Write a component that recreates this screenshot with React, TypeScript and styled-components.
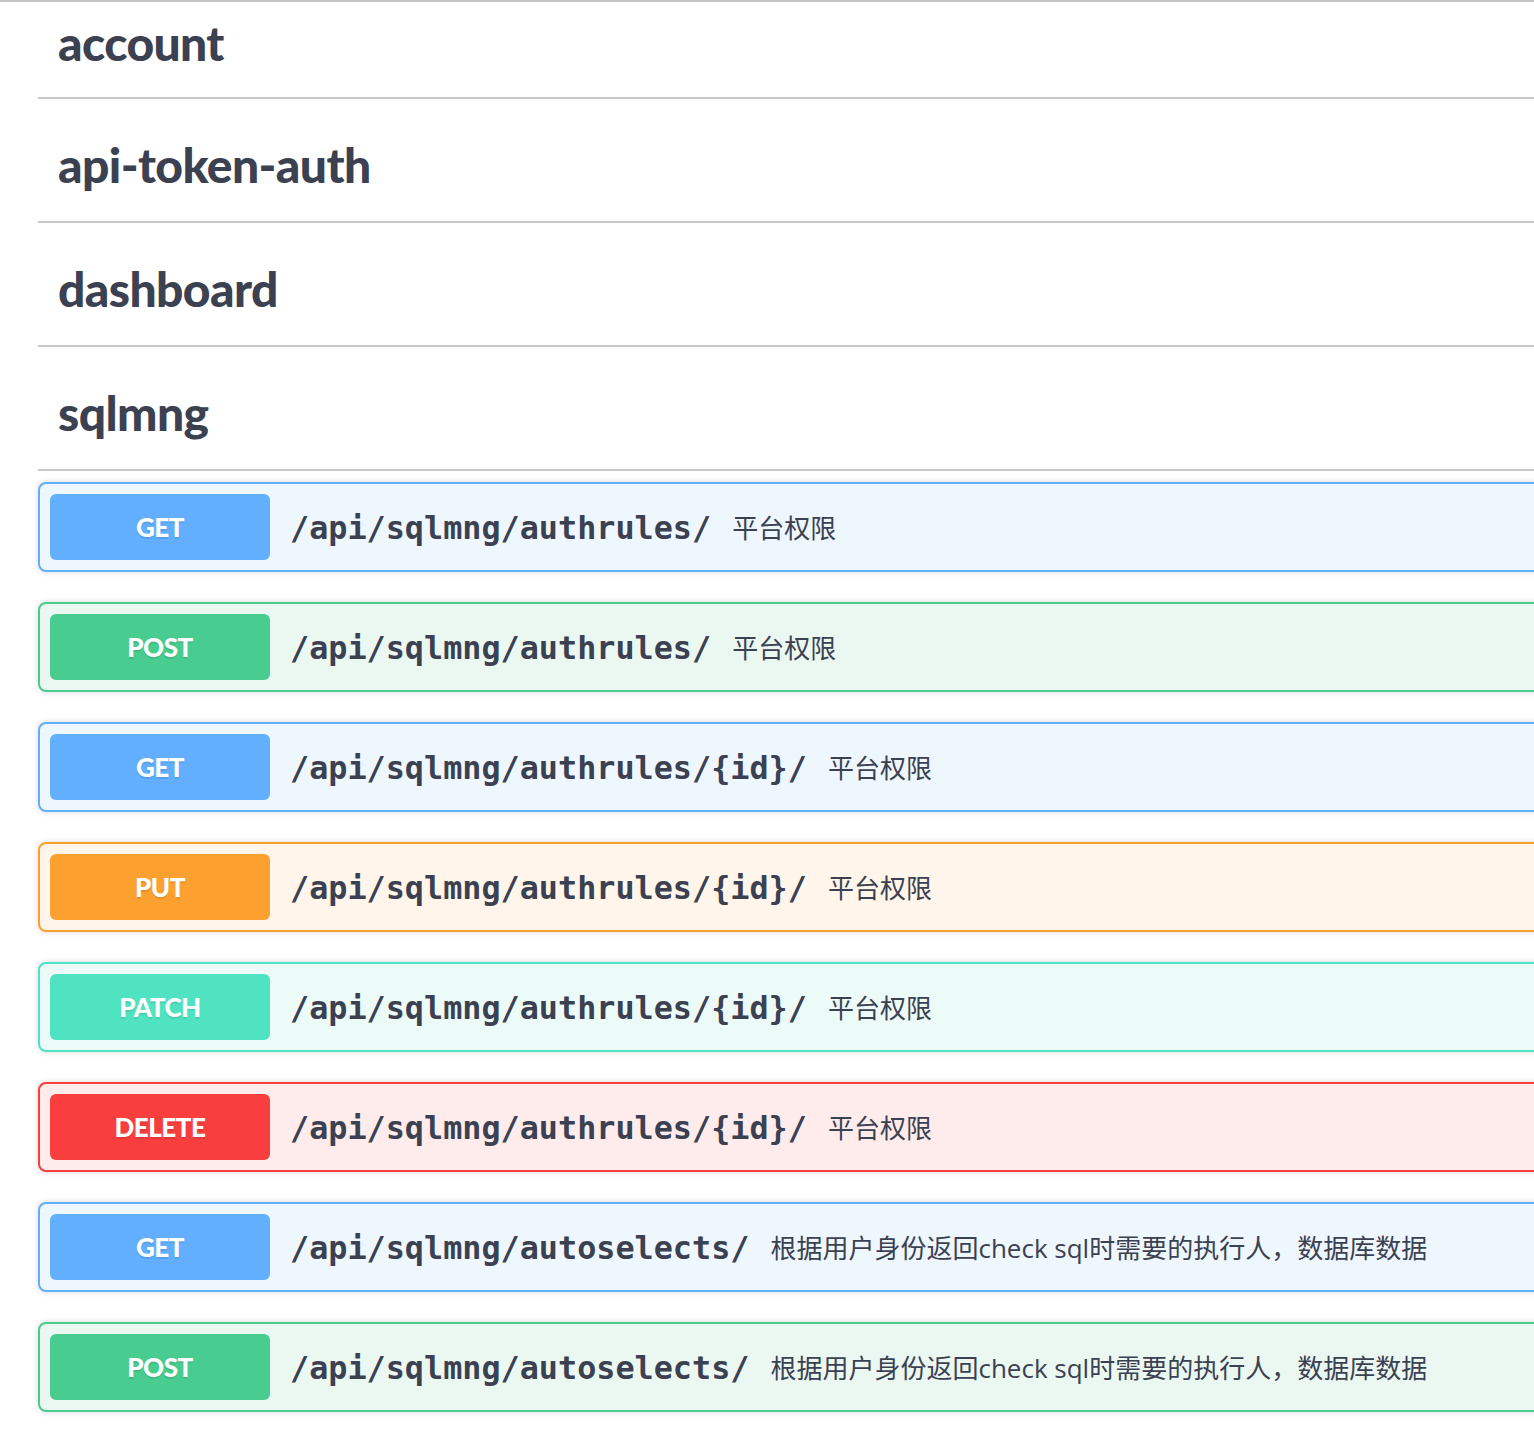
import React from 'react'
import styled, { createGlobalStyle } from 'styled-components'

type Method = 'get' | 'post' | 'put' | 'patch' | 'delete'

const palette: Record<Method, { main: string; bg: string }> = {
  get: { main: '#61affe', bg: '#eef6fe' },
  post: { main: '#49cc90', bg: '#ebf8f2' },
  put: { main: '#fca130', bg: '#fff5ea' },
  patch: { main: '#50e3c2', bg: '#ecfbf7' },
  delete: { main: '#f93e3e', bg: '#feebeb' },
}

const GlobalStyle = createGlobalStyle`
  html, body {
    margin: 0;
    padding: 0;
    background: #fff;
    overflow: hidden;
  }
`

const TopRule = styled.div`
  height: 2px;
  background: #c4c4c4;
`

const Page = styled.div`
  padding-left: 38px;
  margin-right: -60px;
`

const TagHeading = styled.h4<{ $compact?: boolean }>`
  margin: ${(p) => (p.$compact ? '0' : '10px 0 0')};
  height: ${(p) => (p.$compact ? '97px' : '114px')};
  padding: ${(p) => (p.$compact ? '0 0 14px 20px' : '0 0 0 20px')};
  box-sizing: border-box;
  display: flex;
  align-items: center;
  border-bottom: 2px solid #c8c8c8;
  font-family: Lato, 'Open Sans', sans-serif;
  font-weight: 900;
  font-size: 48px;
  letter-spacing: -0.6px;
  line-height: 1.2;
  color: #3b4151;
`

const OpList = styled.div`
  padding-top: 11px;
`

const Opblock = styled.div<{ $method: Method }>`
  display: flex;
  align-items: center;
  padding: 10px;
  margin-bottom: 30px;
  border: 2px solid ${(p) => palette[p.$method].main};
  border-radius: 8px;
  background: ${(p) => palette[p.$method].bg};
  box-shadow: 0 0 6px rgba(0, 0, 0, 0.15);
`

const MethodBadge = styled.span<{ $method: Method }>`
  flex: 0 0 220px;
  height: 66px;
  display: flex;
  align-items: center;
  justify-content: center;
  border-radius: 6px;
  background: ${(p) => palette[p.$method].main};
  color: #fff;
  font-family: Lato, 'Open Sans', sans-serif;
  font-weight: 900;
  font-size: 26px;
  letter-spacing: -0.5px;
  text-transform: uppercase;
  text-shadow: 0 2px 0 rgba(0, 0, 0, 0.1);
`

const Path = styled.span`
  padding: 0 21px 0 20px;
  font-family: 'DejaVu Sans Mono', 'Liberation Mono', monospace;
  font-weight: 700;
  font-size: 31.8px;
  color: #3b4151;
`

const Description = styled.span`
  font-family: 'Open Sans', 'Noto Sans CJK SC', sans-serif;
  font-size: 26px;
  color: #3b4151;
`

const tags = ['account', 'api-token-auth', 'dashboard', 'sqlmng']

const ops: { method: Method; path: string; desc: string }[] = [
  { method: 'get', path: '/api/sqlmng/authrules/', desc: '平台权限' },
  { method: 'post', path: '/api/sqlmng/authrules/', desc: '平台权限' },
  { method: 'get', path: '/api/sqlmng/authrules/{id}/', desc: '平台权限' },
  { method: 'put', path: '/api/sqlmng/authrules/{id}/', desc: '平台权限' },
  { method: 'patch', path: '/api/sqlmng/authrules/{id}/', desc: '平台权限' },
  { method: 'delete', path: '/api/sqlmng/authrules/{id}/', desc: '平台权限' },
  {
    method: 'get',
    path: '/api/sqlmng/autoselects/',
    desc: '根据用户身份返回check sql时需要的执行人，数据库数据',
  },
  {
    method: 'post',
    path: '/api/sqlmng/autoselects/',
    desc: '根据用户身份返回check sql时需要的执行人，数据库数据',
  },
]

export default function App() {
  return (
    <>
      <GlobalStyle />
      <TopRule />
      <Page>
        {tags.map((t, i) => (
          <TagHeading key={t} $compact={i === 0}>
            {t}
          </TagHeading>
        ))}
        <OpList>
          {ops.map((op, i) => (
            <Opblock key={i} $method={op.method}>
              <MethodBadge $method={op.method}>{op.method}</MethodBadge>
              <Path>{op.path}</Path>
              <Description>{op.desc}</Description>
            </Opblock>
          ))}
        </OpList>
      </Page>
    </>
  )
}
